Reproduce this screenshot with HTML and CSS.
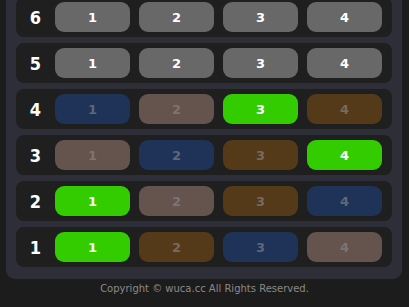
FILE: index.html
```html
<!DOCTYPE html>
<html lang="en">
<head>
    <meta charset="UTF-8">
    <meta name="viewport" content="width=device-width, initial-scale=1.0">
    <title>Lift Board</title>
    <link rel="stylesheet" href="styles.css">
</head>
<body>
    <div class="board">
        <div class="floor">
            <div class="label">6</div>
            <div class="cars">
                <span class="car idle">1</span>
                <span class="car idle">2</span>
                <span class="car idle">3</span>
                <span class="car idle">4</span>
            </div>
        </div>
        <div class="floor">
            <div class="label">5</div>
            <div class="cars">
                <span class="car idle">1</span>
                <span class="car idle">2</span>
                <span class="car idle">3</span>
                <span class="car idle">4</span>
            </div>
        </div>
        <div class="floor">
            <div class="label">4</div>
            <div class="cars">
                <span class="car blue">1</span>
                <span class="car rose">2</span>
                <span class="car green">3</span>
                <span class="car brown">4</span>
            </div>
        </div>
        <div class="floor">
            <div class="label">3</div>
            <div class="cars">
                <span class="car rose">1</span>
                <span class="car blue">2</span>
                <span class="car brown">3</span>
                <span class="car green">4</span>
            </div>
        </div>
        <div class="floor">
            <div class="label">2</div>
            <div class="cars">
                <span class="car green">1</span>
                <span class="car rose">2</span>
                <span class="car brown">3</span>
                <span class="car blue">4</span>
            </div>
        </div>
        <div class="floor">
            <div class="label">1</div>
            <div class="cars">
                <span class="car green">1</span>
                <span class="car brown">2</span>
                <span class="car blue">3</span>
                <span class="car rose">4</span>
            </div>
        </div>
    </div>
    <div class="footer">Copyright &copy; wuca.cc All Rights Reserved.</div>
</body>
</html>
```

FILE: styles.css
```css
body {
    margin: 0;
    background-color: #1c1c1c;
    font-family: "DejaVu Sans", Verdana, sans-serif;
    overflow: hidden;
}
.board {
    margin: -13px 7px 0 6px;
    padding: 10px 10px 12px 10px;
    background-color: #2e2e38;
    border-radius: 0 0 9px 9px;
    display: flex;
    flex-direction: column;
    gap: 6px;
}
.floor {
    height: 40px;
    display: flex;
    align-items: center;
    background-color: #1f1f1f;
    border-radius: 8px;
    padding-right: 10px;
}
.label {
    width: 39px;
    text-align: center;
    color: white;
    font-family: "DejaVu Sans Condensed", "DejaVu Sans", sans-serif;
    font-size: 18px;
    font-weight: bold;
}
.cars {
    flex: 1;
    display: grid;
    grid-template-columns: repeat(4, 1fr);
    gap: 9px;
}
.car {
    height: 30px;
    border-radius: 9px;
    display: flex;
    align-items: center;
    justify-content: center;
    font-size: 13px;
    font-weight: bold;
    color: rgba(140, 140, 140, 0.6);
}
.idle {
    background-color: #686868;
    color: white;
}
.green {
    background-color: #33cc00;
    color: white;
}
.blue {
    background-color: #1f3358;
}
.rose {
    background-color: #65534e;
}
.brown {
    background-color: #553a19;
}
.footer {
    text-align: center;
    color: #8a8a8a;
    font-size: 10px;
    line-height: 18px;
    padding-top: 1px;
}
```
